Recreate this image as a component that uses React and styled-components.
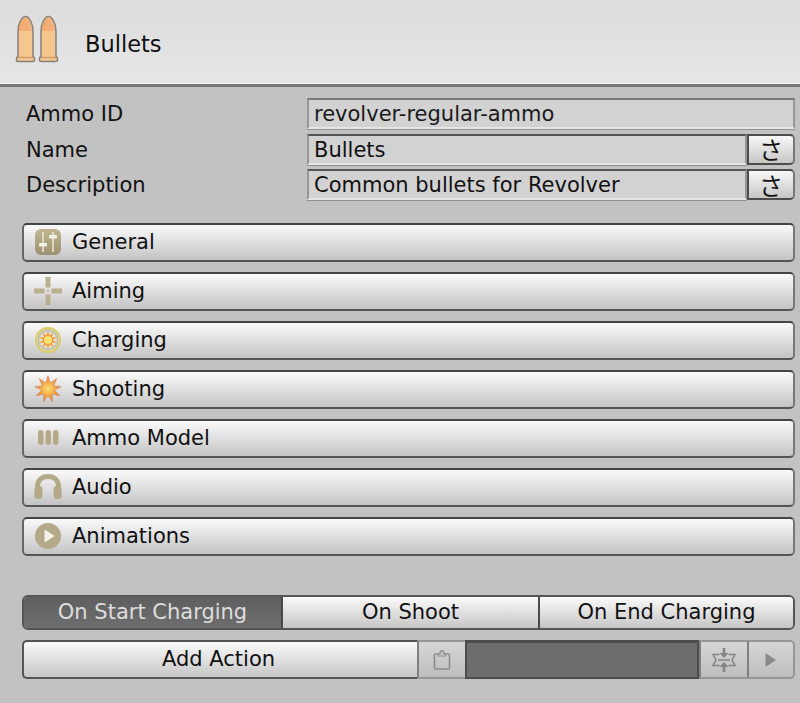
import styled, { createGlobalStyle } from "styled-components";

const Global = createGlobalStyle`
  html, body { margin: 0; padding: 0; background: #c2c2c2; }
  body { font-family: "DejaVu Sans", "Liberation Sans", sans-serif; }
`;

const Page = styled.div`
  width: 800px;
  height: 703px;
  overflow: hidden;
  background: #c2c2c2;
  color: #111;
  font-size: 21px;
`;

const Header = styled.header`
  height: 87px;
  box-sizing: border-box;
  display: flex;
  align-items: flex-start;
  padding: 15px 0 0 15px;
  background: linear-gradient(#dcdcdc, #e6e6e6);
  border-bottom: 3px solid #777;
  box-shadow: inset 0 -1px 0 #f4f4f4;
`;

const HeaderTitle = styled.span`
  margin: 14px 0 0 26px;
  line-height: 30px;
  font-size: 22.500px;
`;

const Fields = styled.section`
  display: grid;
  grid-template-columns: 281px 1fr;
  row-gap: 4.500px;
  padding: 11px 5px 0 26px;
`;

const Label = styled.label`
  align-self: end;
  line-height: 29px;
`;

const FieldRow = styled.div`
  display: flex;
  height: 31px;
`;

const Input = styled.div`
  flex: 1;
  box-sizing: border-box;
  padding-left: 5px;
  line-height: 28px;
  background: #d2d2d2;
  border: 2px solid #969696;
  border-top-color: #555;
  border-bottom-color: #e6e6e6;
  box-shadow: 0 1px 0 #909090;
  ${(p) => p.$locked && "border-top-color: #777; color: #1a1a1a;"}
`;

const LangButton = styled.button`
  width: 48px;
  height: 31px;
  padding: 0;
  font-family: "Noto Sans CJK JP", sans-serif;
  font-size: 24px;
  line-height: 26px;
  color: #111;
  background: linear-gradient(#f8f8f8, #c6c6c6);
  border: 2px solid #4c4c4c;
  border-right-color: #777;
  border-radius: 0 5px 5px 0;
`;

const Sections = styled.section`
  display: flex;
  flex-direction: column;
  gap: 10px;
  margin: 23px 5px 0 22px;
`;

const SectionButton = styled.div`
  height: 39px;
  box-sizing: border-box;
  display: flex;
  align-items: center;
  padding: 0 0 2px 10px;
  gap: 10px;
  background: linear-gradient(#fafafa, #c4c4c4);
  border: 2px solid #555;
  border-top-color: #444;
  border-left-color: #666;
  border-right-color: #777;
  border-radius: 5px;
`;

const IconSlot = styled.span`
  width: 28px;
  height: 28px;
  display: flex;
  align-items: center;
  justify-content: center;
  svg { display: block; }
`;

const Tabs = styled.nav`
  display: flex;
  height: 35px;
  margin: 39px 5px 0 22px;
  border: 2px solid #555;
  border-radius: 6px;
  box-sizing: border-box;
  overflow: hidden;
`;

const Tab = styled.div`
  flex: ${(p) => p.$grow} 0 0;
  text-align: center;
  line-height: 30px;
  background: ${(p) =>
    p.$active ? "linear-gradient(#5f5f5f, #6e6e6e)" : "linear-gradient(#fafafa, #c6c6c6)"};
  color: ${(p) => (p.$active ? "#dedede" : "#111")};
  & + & { border-left: 2px solid #4a4a4a; }
`;

const ActionBar = styled.div`
  display: flex;
  height: 39px;
  margin: 10px 5px 0 22px;
`;

const AddAction = styled.div`
  width: 395px;
  box-sizing: border-box;
  padding-right: 4px;
  text-align: center;
  line-height: 35px;
  background: linear-gradient(#fafafa, #c6c6c6);
  border: 2px solid #555;
  border-right: 0;
  border-radius: 5px 0 0 5px;
`;

const ToolButton = styled.div`
  width: 48px;
  box-sizing: border-box;
  display: flex;
  align-items: center;
  justify-content: center;
  background: linear-gradient(#d6d6d6, #bebebe);
  border: 2px solid #969696;
  border-left-color: #808080;
  border-right-width: ${(p) => (p.$last ? "2px" : "0")};
  border-radius: ${(p) => (p.$last ? "0 5px 5px 0" : "0")};
`;

const DarkSlot = styled.div`
  flex: 1;
  box-sizing: border-box;
  background: #6d6d6d;
  border: 0 solid #4c4c4c;
  border-width: 3px 2px 2px;
`;

const Tan = "#b4a988";

const BulletsIcon = () => (
  <svg width="44" height="48" viewBox="0 0 44 48">
    <defs>
      <linearGradient id="tip" x1="0" x2="1">
        <stop offset="0" stopColor="#f3a86a" />
        <stop offset="1" stopColor="#f1b484" />
      </linearGradient>
    </defs>
    {[0, 23].map((x) => (
      <g key={x} transform={`translate(${x} 0)`}>
        <path d="M3 46.500 Q1.500 46.500 1.500 45 V43.500 Q1.500 42 3 41.500 V17 C3 8 7 1.500 10.500 1.500 C14 1.500 18 8 18 17 V41.500 Q19.500 42 19.500 43.500 V45 Q19.500 46.500 18 46.500 Z" fill="#f5c78e" stroke="#85807c" strokeWidth="1.500" />
        <path d="M3.800 16 C4 8 8 2.500 10.500 2.500 C13 2.500 17 8 17.200 16 Z" fill="url(#tip)" />
        <path d="M3 42.500 H18" stroke="#d09a6c" strokeWidth="1.500" />
      </g>
    ))}
  </svg>
);

const GeneralIcon = () => (
  <svg width="26" height="26" viewBox="0 0 26 26">
    <defs>
      <linearGradient id="gen" x1="0" x2="0" y1="0" y2="1">
        <stop offset="0" stopColor="#c0b68f" />
        <stop offset="1" stopColor="#9c9170" />
      </linearGradient>
    </defs>
    <rect width="26" height="26" rx="6" fill="url(#gen)" />
    <path d="M8 3 V23 M18 3 V23" stroke="#e9e5d6" strokeWidth="1.600" />
    <rect x="4" y="14" width="8" height="3.500" rx="1" fill="#f4f1e6" />
    <rect x="14" y="6" width="8" height="3.500" rx="1" fill="#f4f1e6" />
  </svg>
);

const AimingIcon = () => (
  <svg width="28" height="28" viewBox="0 0 28 28">
    <path d="M11.500 0 H16.500 V10.500 H11.500 Z M11.500 17.500 H16.500 V28 H11.500 Z M0 11.500 H10.500 V16.500 H0 Z M17.500 11.500 H28 V16.500 H17.500 Z" fill="#b9af90" />
    <rect x="12.500" y="12.500" width="3" height="3" fill="#cbc3a8" />
  </svg>
);

const burst = (cx, cy, outer, inner, n) => {
  const pts = [];
  for (let i = 0; i < n * 2; i++) {
    const r = i % 2 ? inner : outer;
    const a = (Math.PI * i) / n - Math.PI / 2;
    pts.push(`${(cx + r * Math.cos(a)).toFixed(1)},${(cy + r * Math.sin(a)).toFixed(1)}`);
  }
  return pts.join(" ");
};

const ChargingIcon = () => (
  <svg width="26" height="26" viewBox="0 0 26 26">
    <circle cx="13" cy="13" r="12" fill="#d8d4c2" stroke="#d9cd62" strokeWidth="2" />
    <circle cx="13" cy="13" r="9.500" fill="#e0dccf" stroke="#a9a285" strokeWidth="0.800" />
    <polygon points={burst(13, 13, 9, 4.500, 10)} fill="#f0972e" />
    <circle cx="13" cy="13" r="4" fill="#fae070" />
  </svg>
);

const ShootingIcon = () => (
  <svg width="26" height="28" viewBox="0 0 26 28">
    <defs>
      <radialGradient id="shot">
        <stop offset="0" stopColor="#fbe27a" />
        <stop offset="0.6" stopColor="#f4a040" />
        <stop offset="1" stopColor="#e9825a" />
      </radialGradient>
    </defs>
    <polygon points={burst(13, 14, 13.500, 6.500, 9)} fill="url(#shot)" stroke="#c9865e" strokeWidth="0.600" />
  </svg>
);

const AmmoIcon = () => (
  <svg width="21" height="15" viewBox="0 0 21 15">
    {[0, 7.500, 15].map((x) => (
      <rect key={x} x={x} y="0" width="5.500" height="15" rx="2.750" fill={Tan} />
    ))}
  </svg>
);

const AudioIcon = () => (
  <svg width="28" height="25" viewBox="0 0 28 25">
    <path d="M3.500 16 V13 C3.500 6 8 2.500 14 2.500 C20 2.500 24.500 6 24.500 13 V16" fill="none" stroke={Tan} strokeWidth="5" />
    <rect x="0.500" y="12" width="8" height="13" rx="3" fill={Tan} />
    <rect x="19.500" y="12" width="8" height="13" rx="3" fill={Tan} />
  </svg>
);

const PlayCircleIcon = () => (
  <svg width="26" height="26" viewBox="0 0 26 26">
    <circle cx="13" cy="13" r="13" fill={Tan} />
    <path d="M9.500 6.500 L19.500 13 L9.500 19.500 Z" fill="#f5f2e8" />
  </svg>
);

const ClipboardIcon = () => (
  <svg width="18" height="20" viewBox="0 0 18 20">
    <path d="M2.500 4 H15.500 A1 1 0 0 1 16.500 5 V18 A1 1 0 0 1 15.500 19 H2.500 A1 1 0 0 1 1.500 18 V5 A1 1 0 0 1 2.500 4 Z" fill="none" stroke="#8c8c8c" strokeWidth="1.600" />
    <path d="M5.500 6 V3.500 H7.200 V1.800 Q7.200 0.800 8.200 0.800 H9.800 Q10.800 0.800 10.800 1.800 V3.500 H12.500 V6 Z" fill="#c8c8c8" stroke="#8c8c8c" strokeWidth="1.200" />
  </svg>
);

const CollapseIcon = () => (
  <svg width="24" height="24" viewBox="0 0 24 24">
    <path d="M7.500 6.500 H1 L4 12 L1 17.500 H7.500 M16.500 6.500 H23 L20 12 L23 17.500 H16.500" fill="none" stroke="#858585" strokeWidth="1.500" />
    <path d="M12 0 V6 M12 24 V18" stroke="#858585" strokeWidth="2.500" />
    <path d="M7.500 5 H16.500 L12 10 Z M7.500 19 H16.500 L12 14 Z" fill="#858585" />
    <path d="M6 12 H18" stroke="#858585" strokeWidth="1.500" />
  </svg>
);

const PlayIcon = () => (
  <svg width="12" height="14" viewBox="0 0 12 14">
    <path d="M0.500 0 L11 7 L0.500 14 Z" fill="#8a8a8a" />
  </svg>
);

const sections = [
  ["General", <GeneralIcon />],
  ["Aiming", <AimingIcon />],
  ["Charging", <ChargingIcon />],
  ["Shooting", <ShootingIcon />],
  ["Ammo Model", <AmmoIcon />],
  ["Audio", <AudioIcon />],
  ["Animations", <PlayCircleIcon />],
];

export default function App() {
  return (
    <Page>
      <Global />
      <Header>
        <BulletsIcon />
        <HeaderTitle>Bullets</HeaderTitle>
      </Header>

      <Fields>
        <Label>Ammo ID</Label>
        <FieldRow>
          <Input $locked>revolver-regular-ammo</Input>
        </FieldRow>
        <Label>Name</Label>
        <FieldRow>
          <Input>Bullets</Input>
          <LangButton>さ</LangButton>
        </FieldRow>
        <Label>Description</Label>
        <FieldRow>
          <Input>Common bullets for Revolver</Input>
          <LangButton>さ</LangButton>
        </FieldRow>
      </Fields>

      <Sections>
        {sections.map(([name, icon]) => (
          <SectionButton key={name}>
            <IconSlot>{icon}</IconSlot>
            {name}
          </SectionButton>
        ))}
      </Sections>

      <Tabs>
        <Tab $active $grow="257">On Start Charging</Tab>
        <Tab $grow="255">On Shoot</Tab>
        <Tab $grow="253">On End Charging</Tab>
      </Tabs>

      <ActionBar>
        <AddAction>Add Action</AddAction>
        <ToolButton><ClipboardIcon /></ToolButton>
        <DarkSlot />
        <ToolButton><CollapseIcon /></ToolButton>
        <ToolButton $last><PlayIcon /></ToolButton>
      </ActionBar>
    </Page>
  );
}
